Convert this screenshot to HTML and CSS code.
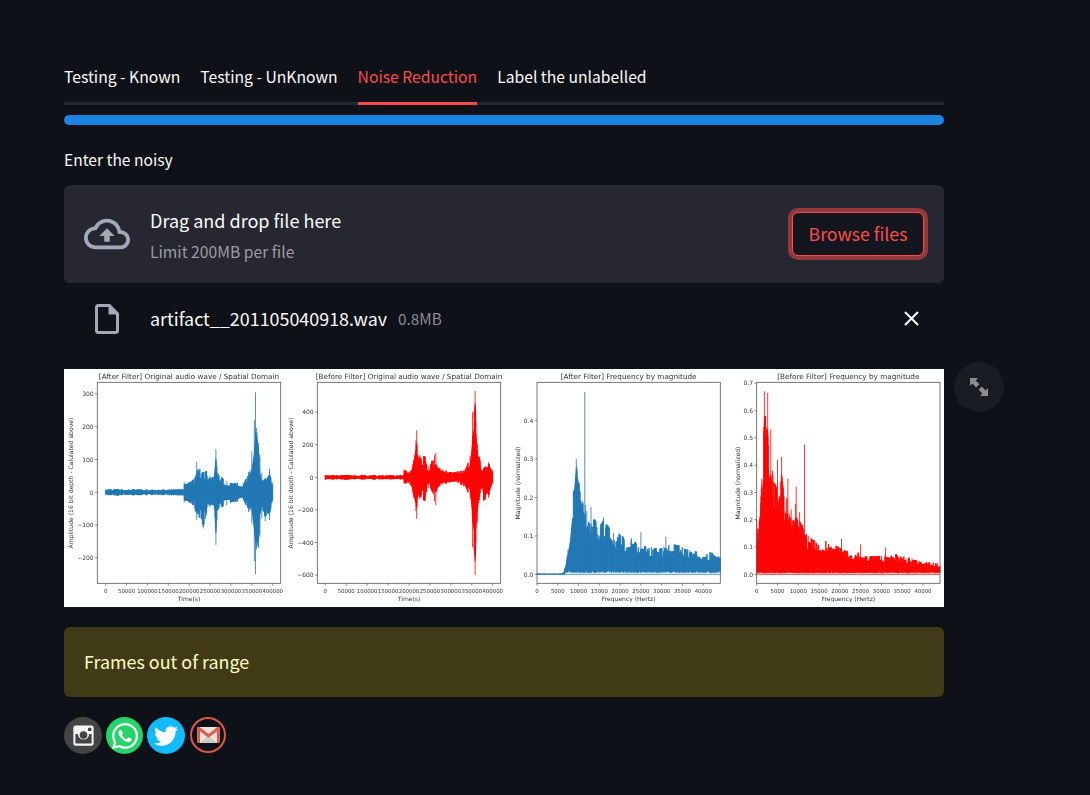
FILE: index.html
```html
<!DOCTYPE html>
<html lang="en">
<head>
  <meta charset="UTF-8" />
  <meta name="viewport" content="width=device-width, initial-scale=1.0"/>
  <title>Noise Reduction</title>
  <link rel="stylesheet" href="styles.css">
</head>
<body>
  <main class="page">

    <div class="tabs">
      <div class="tab">Testing - Known</div>
      <div class="tab">Testing - UnKnown</div>
      <div class="tab active">Noise Reduction</div>
      <div class="tab">Label the unlabelled</div>
    </div>

    <div class="progress"></div>

    <div class="field-label">Enter the noisy</div>

    <!-- UPLOADER -->
    <section class="uploader">
      <svg class="cloud-icon" viewBox="0 0 24 24"><path d="M19.35 10.04C18.67 6.59 15.64 4 12 4 9.11 4 6.6 5.64 5.35 8.04 2.34 8.36 0 10.91 0 14c0 3.31 2.69 6 6 6h13c2.76 0 5-2.24 5-5 0-2.64-2.05-4.78-4.65-4.96zM19 18H6c-2.21 0-4-1.79-4-4 0-2.05 1.53-3.76 3.56-3.97l1.07-.11.5-.95C8.08 7.14 9.94 6 12 6c2.62 0 4.88 1.86 5.39 4.43l.3 1.5 1.53.11c1.56.1 2.78 1.41 2.78 2.96 0 1.65-1.35 3-3 3zM8 13h2.55v3h2.9v-3H16l-4-4z"/></svg>
      <div class="uploader-text">
        <div class="drop-title">Drag and drop file here</div>
        <div class="drop-limit">Limit 200MB per file</div>
      </div>
      <button class="browse-btn" type="button">Browse files</button>
    </section>

    <div class="file-row">
      <div class="file-icon-box">
        <svg class="file-icon" viewBox="0 0 24 24"><path d="M14 2H6c-1.1 0-1.99.9-1.99 2L4 20c0 1.1.89 2 1.99 2H18c1.1 0 2-.9 2-2V8l-6-6zM6 20V4h7v5h5v11H6z"/></svg>
      </div>
      <span class="file-name">artifact__201105040918.wav</span>
      <span class="file-size">0.8MB</span>
      <svg class="close-icon" viewBox="0 0 15 15"><path d="M1 1l13 13M14 1L1 14"/></svg>
    </div>

    <!-- PLOTS -->
    <div class="plot-wrap">
      <svg id="plots" class="plots" viewBox="64 369 880 238"></svg>
      <div class="expand-btn">
        <svg viewBox="0 0 18 18"><path d="M0 0h8L5.6 2.4 9.4 6.2 6.2 9.4 2.4 5.6 0 8zM18 18h-8l2.4-2.4-3.8-3.8 3.2-3.2 3.8 3.8L18 10z"/></svg>
      </div>
    </div>

    <div class="warning">Frames out of range</div>

    <!-- SOCIAL LINKS -->
    <div class="socials">
      <a class="social instagram">
        <svg viewBox="0 0 24 24">
          <path fill-rule="evenodd" d="M5 3h14a2 2 0 0 1 2 2v14a2 2 0 0 1-2 2H5a2 2 0 0 1-2-2V5a2 2 0 0 1 2-2zM4.8 10.6V18.6a.6.6 0 0 0 .6.6h13.2a.6.6 0 0 0 .6-.6V10.6h-2.2a5 5 0 1 1-10 0zM12 8.2a3.4 3.4 0 1 0 0 6.8 3.4 3.4 0 0 0 0-6.8zM16 5v3h3V5z"/>
        </svg>
      </a>
      <a class="social whatsapp">
        <svg viewBox="0 0 24 24"><path d="M17.472 14.382c-.297-.149-1.758-.867-2.03-.967-.273-.099-.471-.148-.67.15-.197.297-.767.966-.94 1.164-.173.199-.347.223-.644.075-.297-.15-1.255-.463-2.39-1.475-.883-.788-1.48-1.761-1.653-2.059-.173-.297-.018-.458.13-.606.134-.133.298-.347.446-.52.149-.174.198-.298.298-.497.099-.198.05-.371-.025-.52-.075-.149-.669-1.612-.916-2.207-.242-.579-.487-.5-.669-.51-.173-.008-.371-.01-.57-.01-.198 0-.52.074-.792.372-.272.297-1.04 1.016-1.04 2.479 0 1.462 1.065 2.875 1.213 3.074.149.198 2.096 3.2 5.077 4.487.709.306 1.262.489 1.694.625.712.227 1.36.195 1.871.118.571-.085 1.758-.719 2.006-1.413.248-.694.248-1.289.173-1.413-.074-.124-.272-.198-.57-.347m-5.421 7.403h-.004a9.87 9.87 0 01-5.031-1.378l-.361-.214-3.741.982.998-3.648-.235-.374a9.86 9.86 0 01-1.51-5.26c.001-5.45 4.436-9.884 9.888-9.884 2.64 0 5.122 1.03 6.988 2.898a9.825 9.825 0 012.893 6.994c-.003 5.45-4.437 9.884-9.885 9.884m8.413-18.297A11.815 11.815 0 0012.05 0C5.495 0 .16 5.335.157 11.892c0 2.096.547 4.142 1.588 5.945L.057 24l6.305-1.654a11.882 11.882 0 005.683 1.448h.005c6.554 0 11.89-5.335 11.893-11.893a11.821 11.821 0 00-3.48-8.413z"/></svg>
      </a>
      <a class="social twitter">
        <svg viewBox="0 0 24 24"><path d="M23.953 4.57a10 10 0 01-2.825.775 4.958 4.958 0 002.163-2.723c-.951.555-2.005.959-3.127 1.184a4.92 4.92 0 00-8.384 4.482C7.69 8.095 4.067 6.13 1.64 3.162a4.822 4.822 0 00-.666 2.475c0 1.71.87 3.213 2.188 4.096a4.904 4.904 0 01-2.228-.616v.06a4.923 4.923 0 003.946 4.827 4.996 4.996 0 01-2.212.085 4.936 4.936 0 004.604 3.417 9.867 9.867 0 01-6.102 2.105c-.39 0-.779-.023-1.17-.067a13.995 13.995 0 007.557 2.209c9.053 0 13.998-7.496 13.998-13.985 0-.21 0-.42-.015-.63A9.935 9.935 0 0024 4.59z"/></svg>
      </a>
      <a class="social gmail">
        <svg viewBox="0 0 24 17">
          <rect y="0" width="24" height="17" rx="1.5" fill="#e9e5dd"/>
          <path d="M3 17L12 9l9 8z" fill="#cfcbc2"/>
          <path d="M0 1.5A1.5 1.5 0 0 1 1.5 0h1L12 7.4 21.5 0h1A1.5 1.5 0 0 1 24 1.5V15.5A1.5 1.5 0 0 1 22.5 17H21V4.6L12 11.4 3 4.6V17H1.5A1.5 1.5 0 0 1 0 15.5z" fill="#dd5a4e"/>
        </svg>
      </a>
    </div>

  </main>
  <script src="charts.js"></script>
</body>
</html>
```

FILE: styles.css
```css
body {
  margin: 0;
  background-color: #0e1117;
  color: #fafafa;
  font-family: 'Noto Sans CJK SC', 'Noto Sans', sans-serif;
  font-size: 16px;
}

.page {
  width: 880px;
  padding: 60px 0 0 64px;
}

/* TABS */
.tabs {
  display: flex;
  gap: 20px;
  height: 42px;
  border-bottom: 3px solid #262730;
}

.tab {
  height: 42px;
  line-height: 33px;
  font-size: 15.7px;
  white-space: nowrap;
}

.tab.active {
  color: #ff4b4b;
  height: 45px;
  box-sizing: border-box;
  border-bottom: 3px solid #ff4b4b;
}

.progress {
  height: 10px;
  margin-top: 10px;
  border-radius: 5px;
  background-color: #1c83e1;
}

.field-label {
  height: 24px;
  margin-top: 23px;
  line-height: 22px;
  font-size: 15.6px;
}

/* UPLOADER */
.uploader {
  display: flex;
  align-items: center;
  height: 98px;
  margin-top: 13px;
  padding: 0 20px;
  border-radius: 6px;
  background-color: #262730;
}

.cloud-icon {
  width: 46px;
  height: 46px;
  fill: #a3a8b8;
}

.uploader-text {
  flex: 1;
  margin-left: 20px;
  padding-top: 3px;
}

.drop-title {
  font-size: 18px;
  line-height: 30px;
}

.drop-limit {
  margin-top: 2px;
  font-size: 15.7px;
  line-height: 30px;
  color: #9b9ca3;
}

.browse-btn {
  width: 132px;
  height: 44px;
  padding: 0 0 2px;
  border: 1px solid #ff4b4b;
  border-radius: 6px;
  background-color: #13161e;
  box-shadow: 0 0 0 4px rgba(255, 75, 75, 0.5);
  color: #ff4b4b;
  font-family: inherit;
  font-size: 17.7px;
}

/* FILE ROW */
.file-row {
  display: flex;
  align-items: center;
  height: 72px;
  padding: 0 25px 0 20px;
}

.file-icon-box {
  display: flex;
  justify-content: center;
  width: 46px;
  margin-right: 20px;
}

.file-icon {
  width: 36px;
  height: 36px;
  fill: #a3a8b8;
}

.file-name {
  padding-bottom: 2px;
  font-size: 17.9px;
}

.file-size {
  margin-left: 11px;
  padding-bottom: 2px;
  font-size: 15.3px;
  color: #8b8c93;
}

.close-icon {
  width: 15px;
  height: 15px;
  margin-bottom: 2px;
  margin-left: auto;
  fill: none;
  stroke: #fafafa;
  stroke-width: 2;
}

/* PLOTS */
.plot-wrap {
  position: relative;
  height: 238px;
  margin-top: 14px;
}

.plots {
  display: block;
  width: 880px;
  height: 238px;
  background-color: #fff;
  filter: blur(0.3px);
}

.plot-wrap text {
  font-family: 'DejaVu Sans', sans-serif;
  fill: #333;
}

.expand-btn {
  position: absolute;
  top: -7px;
  left: 890px;
  display: flex;
  align-items: center;
  justify-content: center;
  width: 50px;
  height: 50px;
  border-radius: 50%;
  background-color: #1a1c23;
}

.expand-btn svg {
  width: 18px;
  height: 18px;
  fill: #8e8e8e;
}

/* WARNING */
.warning {
  height: 70px;
  margin-top: 20px;
  padding-left: 20px;
  border-radius: 6px;
  background-color: #413a16;
  color: #ffffc2;
  font-size: 17.9px;
  line-height: 68px;
}

/* SOCIAL LINKS */
.socials {
  display: flex;
  gap: 4px;
  margin-top: 20px;
}

.social {
  display: flex;
  align-items: center;
  justify-content: center;
  box-sizing: border-box;
  width: 37px;
  height: 37px;
  border-radius: 50%;
}

.instagram {
  width: 38px;
  background-color: #444;
}

.instagram svg {
  width: 27px;
  height: 27px;
  fill: #f5f5f5;
}

.whatsapp {
  background-color: #25d366;
}

.whatsapp svg {
  width: 26px;
  height: 26px;
  fill: #fff;
}

.twitter {
  width: 38px;
  background-color: #12bbff;
}

.twitter svg {
  width: 24px;
  height: 24px;
  fill: #fff;
}

.gmail {
  width: 36px;
  height: 36px;
  margin: 0 0 0 1px;
  border: 2px solid #d9574b;
}

.gmail svg {
  width: 23px;
  height: 16px;
}
```

FILE: charts.js
```js
const NS = 'http://www.w3.org/2000/svg';
const svg = document.getElementById('plots');
const BLUE = '#1f77b4';
const RED = '#ff0000';

// small seeded random so the traces stay the same on every load
let seed = 12345;
function rand() {
  seed = (seed * 1664525 + 1013904223) % 4294967296;
  return seed / 4294967296;
}

function add(tag, attrs, text) {
  const el = document.createElementNS(NS, tag);
  for (const key in attrs) el.setAttribute(key, attrs[key]);
  if (text) el.textContent = text;
  svg.appendChild(el);
  return el;
}

// linear lookup in a list of [x, a, b] points
function lookup(points, x, col) {
  for (let i = 1; i < points.length; i++) {
    if (x <= points[i][0]) {
      const p = points[i - 1], q = points[i];
      return p[col] + (q[col] - p[col]) * (x - p[0]) / (q[0] - p[0]);
    }
  }
  return points[points.length - 1][col];
}

function drawAxes(c) {
  const mid = (c.left + c.right) / 2;
  add('rect', {
    x: c.left, y: 382.3, width: c.right - c.left, height: 201,
    fill: 'none', stroke: '#555', 'stroke-width': 0.8
  });
  add('text', { x: mid, y: 378.6, 'font-size': 7.25, 'text-anchor': 'middle' }, c.title);
  add('text', { x: mid, y: 601, 'font-size': 6, 'text-anchor': 'middle' }, c.xLabel);
  add('text', {
    x: c.yLabelX, y: 483, 'font-size': 6.1, 'text-anchor': 'middle',
    transform: `rotate(-90 ${c.yLabelX} 483)`
  }, c.yLabel);

  c.xTicks.forEach(t => {
    const x = c.x(t);
    add('path', { d: `M${x} 583.3v2.4`, stroke: '#444', 'stroke-width': 0.6 });
    add('text', { x: x, y: 593, 'font-size': 5.4, 'text-anchor': 'middle' }, String(t));
  });
  c.yTicks.forEach(t => {
    const y = c.y(t);
    const label = c.digits ? t.toFixed(c.digits) : String(t).replace('-', '\u2212');
    add('path', { d: `M${c.left} ${y}h-2.4`, stroke: '#444', 'stroke-width': 0.6 });
    add('text', { x: c.left - 3.6, y: y + 2.2, 'font-size': 6, 'text-anchor': 'end' }, label);
  });
}

function drawWave(c) {
  let d = '';
  const x0 = c.x(0), x1 = c.x(400000);
  let f = 1;
  for (let x = x0; x <= x1; x += 0.3) {
    const t = (x - x0) / (x1 - x0);
    if (rand() < 0.3) f = 0.5 + 0.5 * rand();
    const up = lookup(c.env, t, 1) * f;
    const down = lookup(c.env, t, 2) * f;
    d += `M${x.toFixed(1)} ${c.y(up).toFixed(1)}V${c.y(down).toFixed(1)}`;
  }
  // every listed envelope point reaches its full height
  c.env.forEach(p => {
    const x = (x0 + p[0] * (x1 - x0)).toFixed(1);
    d += `M${x} ${c.y(p[1]).toFixed(1)}V${c.y(p[2]).toFixed(1)}`;
  });
  add('path', { d: d, stroke: c.color, 'stroke-width': 0.8, fill: 'none' });
}

function drawSpectrum(c) {
  let d = `M${c.left} ${c.y(0)}H${c.right}`;
  let f = 1;
  for (let x = c.left; x <= c.right; x += 0.3) {
    const hz = (x - c.left) / (c.right - c.left) * 44100;
    if (rand() < 0.3) f = 0.62 + 0.38 * rand();
    const top = lookup(c.env, hz, 1) * f;
    const bottom = top < 0.015 ? 0 : 0.003 + 0.006 * rand();
    d += `M${x.toFixed(1)} ${c.y(top).toFixed(1)}V${c.y(bottom).toFixed(1)}`;
  }
  c.spikes.forEach(s => {
    const x = c.x(s[0]).toFixed(1);
    d += `M${x} ${c.y(s[1]).toFixed(1)}V${c.y(0.01).toFixed(1)}`;
  });
  add('path', { d: d, stroke: c.color, 'stroke-width': 0.8, fill: 'none' });
}

const TIME_TICKS = [0, 50000, 100000, 150000, 200000, 250000, 300000, 350000, 400000];
const HZ_TICKS = [0, 5000, 10000, 15000, 20000, 25000, 30000, 35000, 40000];
const WAVE_LABEL = 'Amplitude (16 bit depth - Calulated above)';
const SPEC_LABEL = 'Magnitude (normalized)';

const wave1 = {
  left: 97.3, right: 280.7, yLabelX: 73.2, color: BLUE,
  title: '[After Filter] Original audio wave / Spatial Domain',
  xLabel: 'Time(s)', yLabel: WAVE_LABEL, xTicks: TIME_TICKS,
  yTicks: [300, 200, 100, 0, -100, -200],
  x: v => 105.7 + v * 167 / 400000,
  y: v => 492.3 - v * 0.328,
  env: [[0, 10, -10], [0.469, 10, -10], [0.47, 32, -32], [0.525, 40, -40], [0.54, 50, -60],
    [0.545, 92, -85], [0.565, 70, -80], [0.585, 62, -110], [0.605, 65, -60], [0.625, 50, -45],
    [0.65, 60, -50], [0.66, 132, -160], [0.67, 60, -55], [0.725, 35, -40], [0.785, 30, -30],
    [0.825, 28, -25], [0.855, 62, -60], [0.875, 125, -95], [0.89, 220, -210], [0.897, 305, -250],
    [0.915, 150, -170], [0.935, 60, -80], [0.955, 45, -88], [0.98, 72, -85], [1, 30, -30]]
};

const wave2 = {
  left: 317.3, right: 500.7, yLabelX: 292.8, color: RED,
  title: '[Before Filter] Original audio wave / Spatial Domain',
  xLabel: 'Time(s)', yLabel: WAVE_LABEL, xTicks: TIME_TICKS,
  yTicks: [400, 200, 0, -200, -400, -600],
  x: v => 325.3 + v * 167.4 / 400000,
  y: v => 477.3 - v * 0.163,
  env: [[0, 14, -14], [0.469, 14, -14], [0.47, 48, -38], [0.506, 38, -48], [0.526, 105, -125],
    [0.546, 288, -255], [0.566, 135, -135], [0.595, 128, -145], [0.615, 65, -65], [0.635, 102, -85],
    [0.66, 150, -172], [0.685, 60, -55], [0.725, 42, -42], [0.785, 36, -28], [0.825, 42, -55],
    [0.865, 130, -130], [0.88, 400, -430], [0.895, 530, -600], [0.91, 205, -275], [0.925, 100, -95],
    [0.945, 55, -145], [0.975, 92, -125], [1, 42, -38]]
};

const spec1 = {
  left: 537, right: 720.3, yLabelX: 519.5, color: BLUE, digits: 1,
  title: '[After Filter] Frequency by magnitude',
  xLabel: 'Frequency (Hertz)', yLabel: SPEC_LABEL, xTicks: HZ_TICKS,
  yTicks: [0.4, 0.3, 0.2, 0.1, 0],
  x: v => 537 + v * 183.3 / 44100,
  y: v => 574.3 - v * 384,
  spikes: [[11500, 0.475], [9450, 0.3], [25000, 0.11], [31000, 0.098], [16000, 0.148], [13000, 0.175]],
  env: [[0, 0.002, 0], [6000, 0.002, 0], [6500, 0.01, 0], [7000, 0.03, 0], [7500, 0.08, 0],
    [8000, 0.125, 0], [8500, 0.21, 0], [9000, 0.225, 0], [9500, 0.295, 0], [10000, 0.25, 0],
    [10500, 0.23, 0], [11000, 0.2, 0], [11500, 0.19, 0], [12000, 0.17, 0], [13000, 0.15, 0],
    [14000, 0.15, 0], [15000, 0.125, 0], [16000, 0.145, 0], [17000, 0.14, 0], [18000, 0.12, 0],
    [19000, 0.11, 0], [20000, 0.12, 0], [21000, 0.09, 0], [23000, 0.095, 0], [25000, 0.08, 0],
    [27000, 0.07, 0], [30000, 0.075, 0], [33000, 0.08, 0], [35000, 0.075, 0], [37000, 0.065, 0],
    [40000, 0.055, 0], [42000, 0.06, 0], [44100, 0.045, 0]]
};

const spec2 = {
  left: 756.7, right: 940, yLabelX: 739.5, color: RED, digits: 1,
  title: '[Before Filter] Frequency by magnitude',
  xLabel: 'Frequency (Hertz)', yLabel: SPEC_LABEL, xTicks: HZ_TICKS,
  yTicks: [0.7, 0.6, 0.5, 0.4, 0.3, 0.2, 0.1, 0],
  x: v => 756.7 + v * 183.3 / 44100,
  y: v => 574.3 - v * 273,
  spikes: [[11500, 0.475], [1850, 0.67], [2650, 0.665], [3400, 0.53], [6000, 0.43], [5000, 0.42],
    [7500, 0.35], [9500, 0.32], [25000, 0.11], [31000, 0.098], [20400, 0.13]],
  env: [[0, 0.2, 0], [300, 0.17, 0], [800, 0.23, 0], [1200, 0.38, 0], [1600, 0.53, 0],
    [1900, 0.6, 0], [2300, 0.6, 0], [2700, 0.58, 0], [3000, 0.45, 0], [3400, 0.48, 0],
    [4000, 0.38, 0], [4800, 0.34, 0], [5000, 0.38, 0], [5500, 0.33, 0], [6000, 0.38, 0],
    [6500, 0.32, 0], [7000, 0.27, 0], [7500, 0.3, 0], [8000, 0.25, 0], [9000, 0.25, 0],
    [9500, 0.29, 0], [10000, 0.27, 0], [11000, 0.2, 0], [11500, 0.14, 0], [12000, 0.15, 0],
    [13000, 0.14, 0], [14000, 0.14, 0], [15000, 0.11, 0], [16000, 0.13, 0], [17000, 0.12, 0],
    [18000, 0.115, 0], [20000, 0.11, 0], [22000, 0.085, 0], [25000, 0.08, 0], [27000, 0.068, 0],
    [30000, 0.075, 0], [33000, 0.075, 0], [37000, 0.065, 0], [40000, 0.05, 0], [44100, 0.042, 0]]
};

[wave1, wave2].forEach(c => { drawWave(c); drawAxes(c); });
[spec1, spec2].forEach(c => { drawSpectrum(c); drawAxes(c); });
```
